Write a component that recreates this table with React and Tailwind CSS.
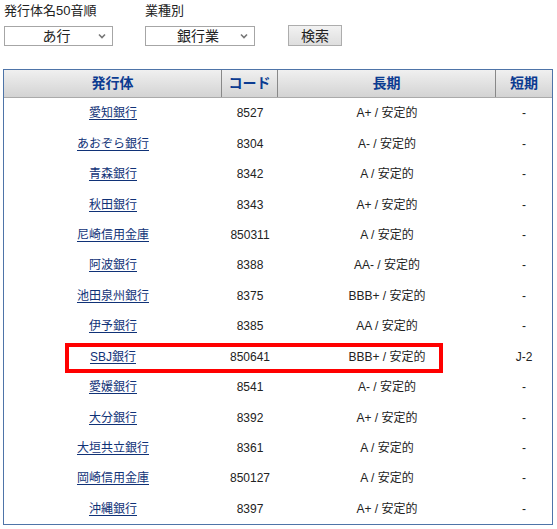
import React from "react";

const rows = [
  ["愛知銀行", "8527", "A+ / 安定的", "-"],
  ["あおぞら銀行", "8304", "A- / 安定的", "-"],
  ["青森銀行", "8342", "A / 安定的", "-"],
  ["秋田銀行", "8343", "A+ / 安定的", "-"],
  ["尼崎信用金庫", "850311", "A / 安定的", "-"],
  ["阿波銀行", "8388", "AA- / 安定的", "-"],
  ["池田泉州銀行", "8375", "BBB+ / 安定的", "-"],
  ["伊予銀行", "8385", "AA / 安定的", "-"],
  ["SBJ銀行", "850641", "BBB+ / 安定的", "J-2"],
  ["愛媛銀行", "8541", "A- / 安定的", "-"],
  ["大分銀行", "8392", "A+ / 安定的", "-"],
  ["大垣共立銀行", "8361", "A / 安定的", "-"],
  ["岡崎信用金庫", "850127", "A / 安定的", "-"],
  ["沖縄銀行", "8397", "A+ / 安定的", "-"],
];

const font = { fontFamily: '"Liberation Sans", "Noto Sans CJK JP", sans-serif' };

function Chevron() {
  return (
    <svg width="8" height="6" viewBox="0 0 8 6" className="shrink-0">
      <path d="M1 1.5 L4 4.5 L7 1.5" stroke="#777" strokeWidth="1.6" fill="none" />
    </svg>
  );
}

function FakeSelect({ label, className }) {
  return (
    <div
      className={`flex items-center h-[20px] border border-[#a6a6a6] bg-white text-[14px] text-[#222] pr-[6px] ${className}`}
    >
      <span className="flex-1 text-center leading-none pl-[10px]">{label}</span>
      <Chevron />
    </div>
  );
}

export default function App() {
  return (
    <div className="w-[557px] h-[529px] bg-white relative overflow-hidden" style={font}>
      <div className="flex pl-[4px] pt-[3px]">
        <div className="flex flex-col w-[141px]">
          <span className="text-[13px] leading-[16px] text-[#222]">発行体名50音順</span>
          <FakeSelect label="あ行" className="w-[109px] mt-[7px]" />
        </div>
        <div className="flex flex-col w-[143px]">
          <span className="text-[13px] leading-[16px] text-[#222]">業種別</span>
          <FakeSelect label="銀行業" className="w-[110px] mt-[7px]" />
        </div>
        <div className="flex flex-col">
          <span className="h-[16px]"></span>
          <div className="mt-[6px] w-[54px] h-[21px] border border-[#adadad] bg-gradient-to-b from-[#f2f2f2] to-[#dedede] flex items-center justify-center text-[14px] text-[#222] leading-none">
            検索
          </div>
        </div>
      </div>

      <div className="absolute left-[3px] top-[69px] w-[550px] border border-[#4e74a8]">
        <div className="grid grid-cols-[218px_56px_218px_1fr] h-[28px] bg-gradient-to-b from-[#f0f0f0] to-[#d3d3d3] border-b border-[#aaa] text-[14px] font-bold text-[#0b3b91]">
          <div className="flex items-center justify-center border-r border-[#888]">発行体</div>
          <div className="flex items-center justify-center border-r border-[#888]">コード</div>
          <div className="flex items-center justify-center border-r border-[#888]">長期</div>
          <div className="flex items-center justify-center">短期</div>
        </div>
        {rows.map((r, i) => (
          <div
            key={i}
            className="grid grid-cols-[218px_56px_218px_1fr] h-[30.45px] text-[12px] text-[#222]"
          >
            <div className="flex items-center justify-center">
              <a className="text-[#103277] underline underline-offset-[2px]" href="#">
                {r[0]}
              </a>
            </div>
            <div className="flex items-center justify-center">{r[1]}</div>
            <div className="flex items-center justify-center">{r[2]}</div>
            <div className="flex items-center justify-center">{r[3]}</div>
          </div>
        ))}
      </div>

      <div className="absolute left-[65px] top-[343px] w-[378px] h-[30px] border-[4px] border-[#ff0000]"></div>
    </div>
  );
}
